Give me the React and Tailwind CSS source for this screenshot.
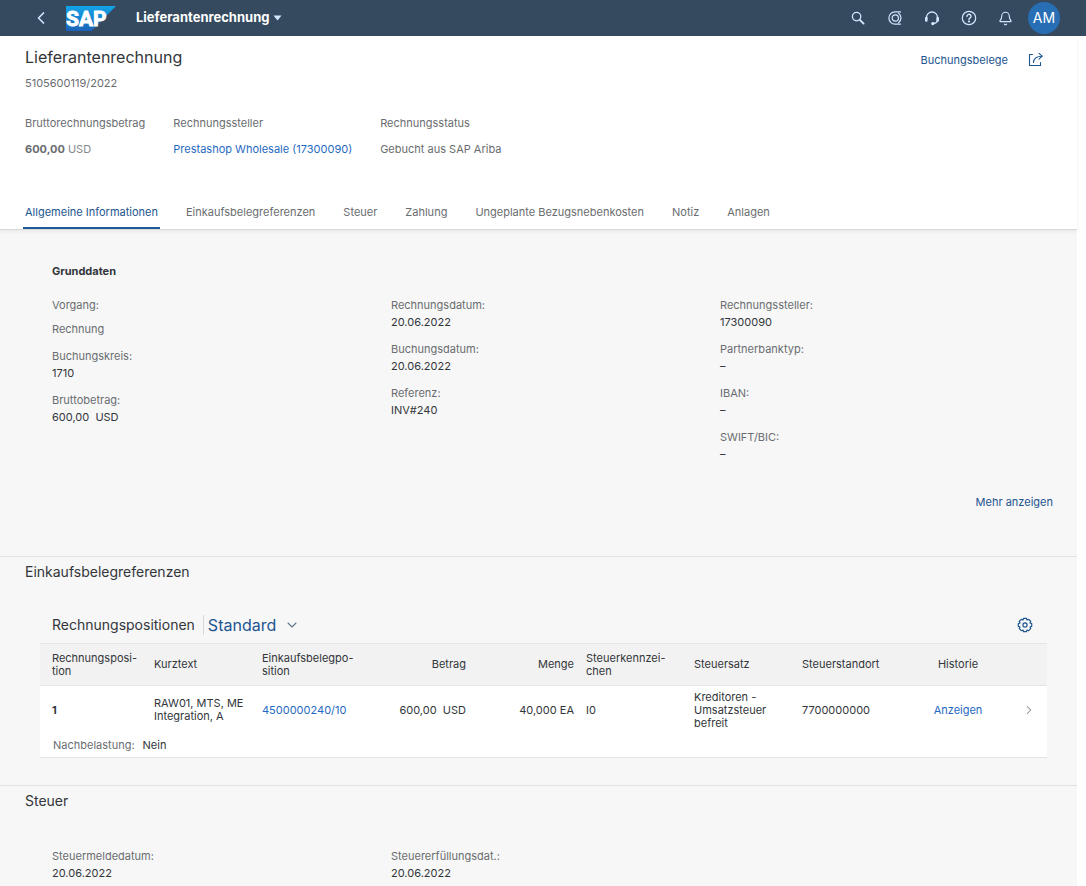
import React from "react";
import { Bell, ChevronDown, ChevronLeft, ChevronRight } from "lucide-react";

const tabs = [
  "Allgemeine Informationen",
  "Einkaufsbelegreferenzen",
  "Steuer",
  "Zahlung",
  "Ungeplante Bezugsnebenkosten",
  "Notiz",
  "Anlagen",
];

function SapLogo() {
  return (
    <svg width="50" height="25" viewBox="0 0 50 25" role="img" aria-label="SAP">
      <defs>
        <linearGradient id="sap-blue" x1="0" y1="0" x2="0" y2="1">
          <stop offset="0" stopColor="#12a5e8" />
          <stop offset="1" stopColor="#1c62b8" />
        </linearGradient>
      </defs>
      <path d="M0 0H50L25.500 25H0Z" fill="url(#sap-blue)" />
      <text
        x="0"
        y="20"
        fill="#fff"
        stroke="#fff"
        strokeWidth="0.9"
        fontFamily="Liberation Sans Narrow, Roboto, sans-serif"
        fontWeight="700"
        fontSize="21"
      >
        SAP
      </text>
    </svg>
  );
}

function SearchIcon() {
  return (
    <svg width="14" height="14" viewBox="0 0 14 14" fill="none" stroke="currentColor" strokeLinecap="round">
      <circle cx="5.600" cy="5.600" r="4.200" strokeWidth="1.300" />
      <path d="M8.800 8.800L12.600 12.600" strokeWidth="1.900" />
    </svg>
  );
}

function CopilotIcon() {
  return (
    <svg width="14" height="14" viewBox="0 0 14 14" fill="none" stroke="currentColor" strokeWidth="1.2" strokeLinecap="round">
      <path d="M12.500 0.900H7A6.100 6.100 0 0 0 7 13.100H12.500" />
      <path d="M10.500 2.200A5.900 5.900 0 0 1 10.500 11.800" />
      <circle cx="7.300" cy="7" r="3.200" />
    </svg>
  );
}

function HeadsetIcon() {
  return (
    <svg width="16" height="16" viewBox="0 0 16 16" fill="none" stroke="currentColor" strokeWidth="1.3" strokeLinecap="round">
      <path d="M2.500 9V7.500A5.500 5.500 0 0 1 13.500 7.500V9.500C13.500 12 12 13.300 9.500 13.500" />
      <path d="M2.300 8V10.400M13.700 8V10.400" strokeWidth="2.600" />
      <circle cx="8.800" cy="13.600" r="1" fill="currentColor" />
    </svg>
  );
}

function HelpIcon() {
  return (
    <svg width="16" height="16" viewBox="0 0 16 16" fill="none" stroke="currentColor" strokeWidth="1.2" strokeLinecap="round">
      <circle cx="8" cy="8" r="6.700" />
      <path d="M6 6.400A2 2 0 1 1 9 8Q8 8.500 8 9.500" strokeWidth="1.400" />
      <circle cx="8" cy="11.500" r="0.500" fill="currentColor" />
    </svg>
  );
}

function ShareIcon() {
  return (
    <svg width="16" height="16" viewBox="0 0 16 16" fill="none" stroke="currentColor" strokeWidth="1.100" strokeLinecap="round" strokeLinejoin="round">
      <path d="M4.500 2.500H1.500V13.500H12.500V10.500" />
      <path d="M5.500 10.500C5.700 6.500 8 4.200 14 4.200" />
      <path d="M11 1.300L14.200 4.200L11 7.200" />
    </svg>
  );
}

function GearIcon() {
  return (
    <svg width="16" height="16" viewBox="0 0 16 16" fill="none" stroke="currentColor" strokeWidth="1.200" strokeLinejoin="round">
      <path d="M6.600 1.300H9.400L10 3L11.700 2.400L13.700 4.300L13 6L14.700 6.600V9.400L13 10L13.700 11.700L11.700 13.700L10 13L9.400 14.700H6.600L6 13L4.300 13.700L2.300 11.700L3 10L1.300 9.400V6.600L3 6L2.300 4.300L4.300 2.400L6 3Z" />
      <circle cx="8" cy="8" r="2.100" />
    </svg>
  );
}

function Field({ label, value, spaced }) {
  return (
    <div className="leading-[17px]">
      <dt className="text-[#6a6d70]">{label}</dt>
      <dd className={spaced ? "pt-[7px] text-[#6a6d70]" : "text-[#32363a]"}>{value}</dd>
    </div>
  );
}

function ShellButton({ label, children }) {
  return (
    <button type="button" aria-label={label} className="flex w-[37px] items-center justify-center">
      {children}
    </button>
  );
}

export default function App() {
  return (
    <div className="min-h-screen bg-white font-['Inter',sans-serif] text-[11px] text-[#32363a]">
      <header className="flex h-9 items-center bg-[#354a5f] pr-[26px] pl-[31px] text-[#d1e8ff]">
        <button type="button" aria-label="Zurück" className="flex w-[35px] items-center">
          <ChevronLeft size={20} strokeWidth={2} />
        </button>
        <SapLogo />
        <button type="button" className="ml-5 flex items-center gap-1 text-[13px] font-bold text-white">
          Lieferantenrechnung
          <svg width="9" height="6" viewBox="0 0 9 6" fill="#d1e8ff" aria-hidden="true">
            <path d="M0.500 0.500H8.500L4.500 5.500Z" />
          </svg>
        </button>
        <div className="ml-auto flex items-center">
          <ShellButton label="Suchen"><SearchIcon /></ShellButton>
          <ShellButton label="CoPilot"><CopilotIcon /></ShellButton>
          <ShellButton label="Support"><HeadsetIcon /></ShellButton>
          <ShellButton label="Hilfe"><HelpIcon /></ShellButton>
          <ShellButton label="Mitteilungen"><Bell size={15} strokeWidth={1.8} /></ShellButton>
          <button type="button" className="ml-1 size-8 rounded-full bg-[#286eb4] text-sm text-white">AM</button>
        </div>
      </header>

      <div className="mr-[9px]">
        <div className="relative border-b border-[#d9d9d9] bg-white px-[25px] pt-[9px] shadow-[0_2px_4px_rgba(0,0,0,0.06)]">
          <div className="flex items-start justify-between">
            <div>
              <h1 className="text-base leading-6">Lieferantenrechnung</h1>
              <p className="mt-1 leading-5 text-[#6a6d70]">5105600119/2022</p>
            </div>
            <div className="mt-[5px] mr-2 flex items-center gap-5 text-[#1c5590]">
              <button type="button" className="leading-5">Buchungsbelege</button>
              <button type="button" aria-label="Teilen"><ShareIcon /></button>
            </div>
          </div>
          <dl className="mt-5 flex gap-7 leading-5 text-[#6a6d70]">
            <div>
              <dt>Bruttorechnungsbetrag</dt>
              <dd className="mt-[6px]"><b>600,00</b> <span className="text-[#85888b]">USD</span></dd>
            </div>
            <div>
              <dt>Rechnungssteller</dt>
              <dd className="mt-[6px]"><a href="#lieferant" className="text-[#1f6ac2]">Prestashop Wholesale (17300090)</a></dd>
            </div>
            <div>
              <dt>Rechnungsstatus</dt>
              <dd className="mt-[6px]">Gebucht aus SAP Ariba</dd>
            </div>
          </dl>
          <nav className="-ml-[2px] mt-[34px] flex gap-6">
            {tabs.map((tab, i) => (
              <a
                key={tab}
                href={"#tab-" + i}
                aria-current={i === 0 ? "true" : undefined}
                className={
                  i === 0
                    ? "border-b-[2px] border-[#1c5c96] px-[2px] pt-[9px] pb-[5px] leading-5 text-[#1c5590]"
                    : "px-[2px] pt-[9px] pb-[7px] leading-5 text-[#6a6d70]"
                }
              >
                {tab}
              </a>
            ))}
          </nav>
        </div>

        <main className="bg-[#f7f7f7]">
          <section className="pr-6 pb-11 pl-[52px] pt-[31px]">
            <h2 className="leading-5 font-bold">Grunddaten</h2>
            <div className="mt-4 grid grid-cols-[339fr_329fr_333fr]">
              <dl className="flex flex-col gap-[10px]">
                <Field label="Vorgang:" value="Rechnung" spaced />
                <Field label="Buchungskreis:" value="1710" />
                <Field label="Bruttobetrag:" value={"600,00\u00a0 USD"} />
              </dl>
              <dl className="flex flex-col gap-[10px]">
                <Field label="Rechnungsdatum:" value="20.06.2022" />
                <Field label="Buchungsdatum:" value="20.06.2022" />
                <Field label="Referenz:" value="INV#240" />
              </dl>
              <dl className="flex flex-col gap-[10px]">
                <Field label="Rechnungssteller:" value="17300090" />
                <Field label="Partnerbanktyp:" value="–" />
                <Field label="IBAN:" value="–" />
                <Field label="SWIFT/BIC:" value="–" />
              </dl>
            </div>
            <div className="mt-[29px] flex justify-end">
              <button type="button" className="leading-5 text-[#1c5590]">Mehr anzeigen</button>
            </div>
          </section>

          <section className="border-t border-[#e2e2e2] pb-[27px]">
            <h2 className="pt-[5px] pl-[25px] text-sm leading-5">Einkaufsbelegreferenzen</h2>
            <div className="mr-[30px] ml-10 mt-[25px]">
              <div className="flex h-9 items-center pr-[14px] pl-3">
                <h3 className="text-sm leading-5">Rechnungspositionen</h3>
                <div className="ml-2 flex items-center gap-2 border-l border-[#d9d9d9] pl-1 text-[#1c5590]">
                  <select aria-label="Ansicht" className="field-sizing-content appearance-none text-base leading-5">
                    <option>Standard</option>
                  </select>
                  <ChevronDown size={16} strokeWidth={1.6} className="text-[#5f7388]" />
                </div>
                <button type="button" aria-label="Einstellungen" className="ml-auto text-[#1c5590]"><GearIcon /></button>
              </div>
              <table className="w-full table-fixed border-y border-[#e5e5e5] bg-white text-left leading-[13px]">
                <colgroup>
                  <col /><col /><col /><col /><col /><col /><col /><col /><col />
                  <col className="w-[35px]" />
                </colgroup>
                <thead className="border-b border-[#e5e5e5] bg-[#f2f2f2]">
                  <tr className="h-[42px] *:px-[6px] *:font-normal">
                    <th scope="col"><div className="pl-[6px]">Rechnungsposi-<br />tion</div></th>
                    <th scope="col">Kurztext</th>
                    <th scope="col">Einkaufsbelegpo-<br />sition</th>
                    <th scope="col" className="text-right">Betrag</th>
                    <th scope="col" className="text-right">Menge</th>
                    <th scope="col">Steuerkennzei-<br />chen</th>
                    <th scope="col">Steuersatz</th>
                    <th scope="col">Steuerstandort</th>
                    <th scope="col" className="text-center">Historie</th>
                    <td />
                  </tr>
                </thead>
                <tbody>
                  <tr className="h-[49px] *:px-[6px]">
                    <td><div className="pl-[6px] font-bold">1</div></td>
                    <td className="whitespace-nowrap">RAW01, MTS, ME<br />Integration, A</td>
                    <td><a href="#bestellung" className="text-[#1f6ac2]">4500000240/10</a></td>
                    <td className="text-right">{"600,00\u00a0 USD"}</td>
                    <td className="text-right">40,000 EA</td>
                    <td>I0</td>
                    <td>Kreditoren -<br />Umsatzsteuer<br />befreit</td>
                    <td>7700000000</td>
                    <td className="text-center"><a href="#historie" className="text-[#1f6ac2]">Anzeigen</a></td>
                    <td><button type="button" aria-label="Details" className="ml-1 flex text-[#85888b]"><ChevronRight size={14} strokeWidth={1.8} /></button></td>
                  </tr>
                  <tr className="h-[23px]">
                    <td colSpan={10} className="pl-[13px] align-middle">
                      <span className="text-[#6a6d70]">Nachbelastung:</span>
                      <span className="ml-2">Nein</span>
                    </td>
                  </tr>
                </tbody>
              </table>
            </div>
          </section>

          <section className="border-t border-[#e2e2e2] pb-1">
            <h2 className="pt-[5px] pl-[25px] text-sm leading-5">Steuer</h2>
            <dl className="mt-[37px] grid grid-cols-[339fr_329fr_333fr] pr-6 pl-[52px]">
              <Field label="Steuermeldedatum:" value="20.06.2022" />
              <Field label="Steuererfüllungsdat.:" value="20.06.2022" />
            </dl>
          </section>
        </main>
      </div>
    </div>
  );
}
